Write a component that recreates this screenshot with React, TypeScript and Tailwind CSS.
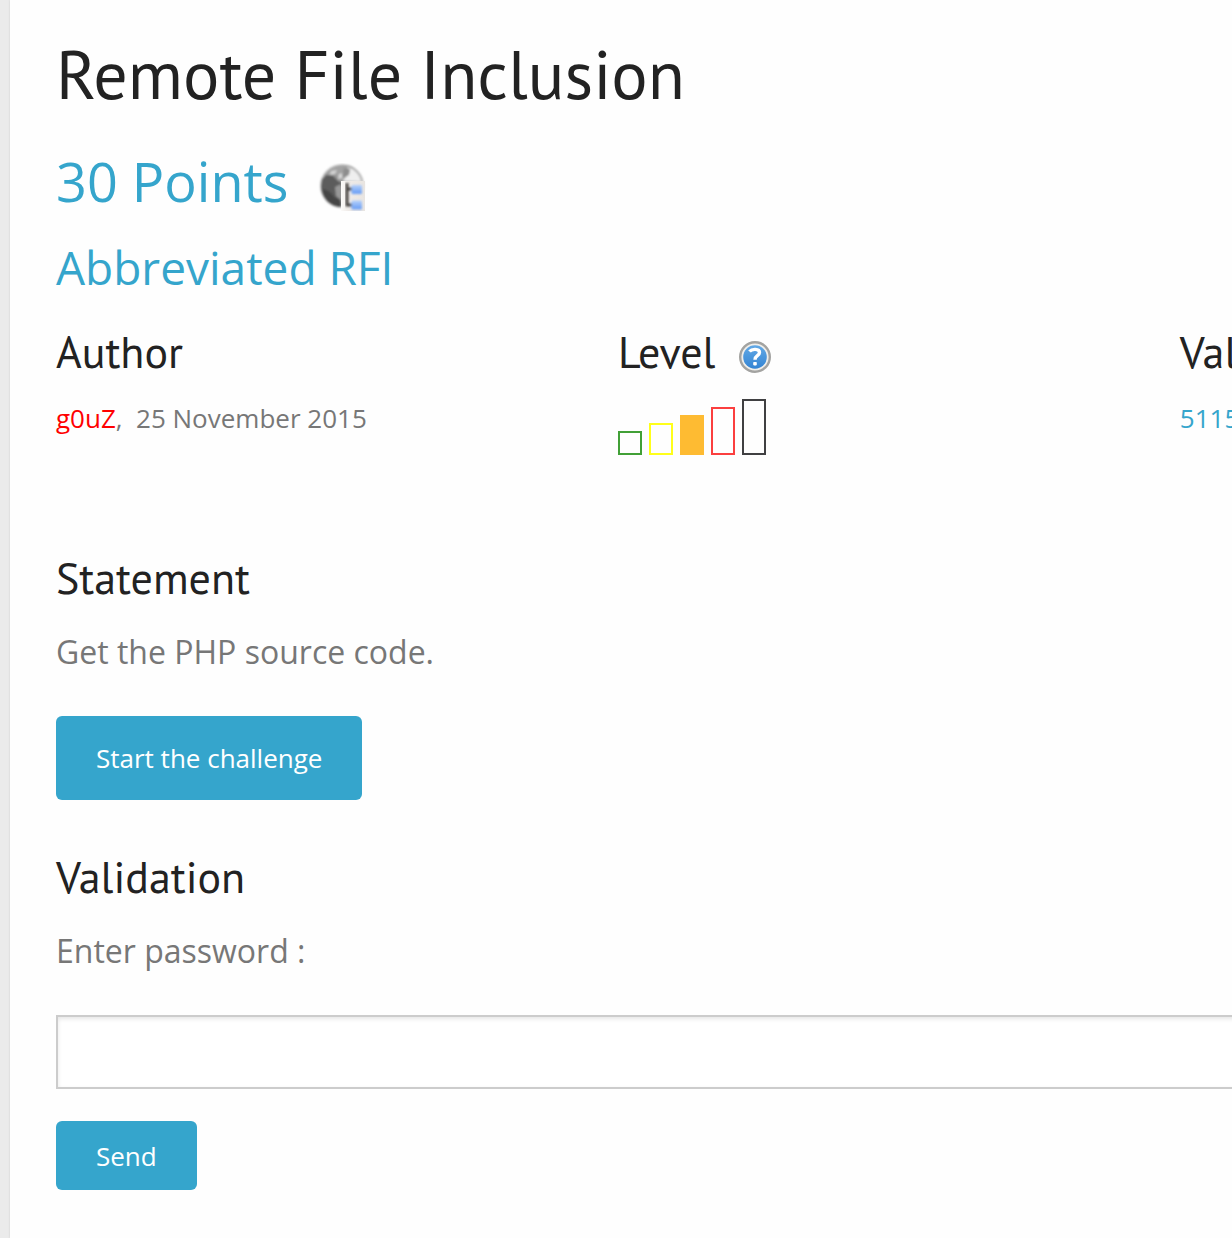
import React from "react";

const heading = "font-['PT_Sans',Lato,sans-serif] text-[#222]";

function GlobeTreeIcon() {
  return (
    <svg viewBox="0 0 48 48" className="size-12" role="img" aria-label="Web server">
      <defs>
        <linearGradient id="globe" x1="0" y1="0.6" x2="1" y2="0.2">
          <stop offset="0" stopColor="#4a4a4a" />
          <stop offset="0.45" stopColor="#9a9a9a" />
          <stop offset="1" stopColor="#ececec" />
        </linearGradient>
        <linearGradient id="node" x1="0" y1="0" x2="0" y2="1">
          <stop offset="0" stopColor="#b4d0fb" />
          <stop offset="1" stopColor="#669cf5" />
        </linearGradient>
        <linearGradient id="panel" x1="0" y1="0" x2="1" y2="0">
          <stop offset="0" stopColor="#fbfaf9" />
          <stop offset="0.3" stopColor="#efebe8" />
          <stop offset="1" stopColor="#e9e5e1" />
        </linearGradient>
        <filter id="soft" x="-10%" y="-10%" width="120%" height="120%">
          <feGaussianBlur stdDeviation="0.9" />
        </filter>
      </defs>
      <g filter="url(#soft)">
        <circle cx="24" cy="23" r="21" fill="url(#globe)" stroke="#bdbdbd" strokeWidth="1.6" />
        <path d="M8 12C12 5 19 2 26 2c5 0 8 1 11 4l-7 4-7 3-8-1z" fill="#a2a2a2" />
        <path d="M4 16l6-4 5 1 5 5 5 2-2 5-4 4 3 6 1 9C12 44 3 34 3 23z" fill="#5c5c5c" />
        <path d="M4 26c6 1 10 4 12 8l6 3 1 7C12 43 5 36 4 26z" fill="#454545" />
        <path d="M13 8l6-1-2 4-5 1z" fill="#d4d4d4" />
        <path d="M21 11l5-1-2 5-4 1z" fill="#d8d8d8" />
        <path d="M17 24l6-3v16l-5-4z" fill="#989898" />
        <path d="M29 4c8 2 13 7 15 14H25l4-6 3-3z" fill="#efefef" />
        <path d="M26 5l6 1-1 6-5 3-2-2z" fill="#8d8d8d" />
        <path d="M36 6c4 3 7 7 8 12" fill="none" stroke="#b2b2b2" strokeWidth="2" />
      </g>
      <path d="M23 18h24v30H23z" fill="url(#panel)" />
      <g filter="url(#soft)">
        <path d="M29 20v22h7M29 26h7" fill="none" stroke="#474443" strokeWidth="3" />
        <rect x="33.5" y="22" width="10.5" height="9" rx="1" fill="url(#node)" />
        <rect x="33.5" y="37.500" width="10.5" height="9" rx="1" fill="url(#node)" />
      </g>
    </svg>
  );
}

function HelpIcon() {
  return (
    <svg viewBox="0 0 32 32" className="size-8" aria-hidden="true">
      <defs>
        <linearGradient id="help" x1="0" y1="0" x2="0" y2="1">
          <stop offset="0" stopColor="#62a9e6" />
          <stop offset="1" stopColor="#3484d3" />
        </linearGradient>
        <filter id="helpSoft" x="-10%" y="-10%" width="120%" height="120%">
          <feGaussianBlur stdDeviation="0.5" />
        </filter>
      </defs>
      <g filter="url(#helpSoft)">
        <circle cx="16" cy="16" r="14.8" fill="#efeeeb" stroke="#a3a3a1" strokeWidth="2.4" />
        <circle cx="16" cy="16" r="11.8" fill="url(#help)" />
        <path d="M10.500 10.500C13 7.500 20.500 7.500 20.500 11.500c0 3.500-4.500 3-4.500 7.200" fill="none" stroke="#fff" strokeWidth="3.4" />
        <rect x="14.200" y="21" width="3.600" height="3.400" rx="0.800" fill="#fff" />
      </g>
    </svg>
  );
}

const levels = [
  "h-6 border-[#41a037]",
  "h-8 border-[#ffff1a]",
  "h-10 border-[#febb32] bg-[#febb32]",
  "h-12 border-[#fb3f3f]",
  "h-14 border-[#404042]",
];

export default function App() {
  return (
    <div className="min-h-screen overflow-hidden bg-[#ebebeb] pl-[10px] font-['Open_Sans',sans-serif] text-[#777]">
      <main className="min-h-screen overflow-hidden bg-[#fefefe] pt-[34px] pb-12 pl-[46px] shadow-[0_0_2px_#ccc]">
        <div className="w-[143%]">
          <h1 className={`${heading} text-[68px] leading-[80px]`}>Remote File Inclusion</h1>
          <h2 className="mt-[31px] flex items-end gap-[30px] text-[54px] leading-[72px] text-[#35a5cc]">
            30 Points
            <span className="pb-1.5">
              <GlobeTreeIcon />
            </span>
          </h2>
          <h3 className="mt-5 text-[46px] leading-[60px] text-[#35a5cc]">Abbreviated RFI</h3>

          <div className="mt-[27px] grid grid-cols-3 gap-1">
            <section>
              <h4 className={`${heading} text-[44px] leading-[56px]`}>Author</h4>
              <p className="mt-[18px] text-[26px] leading-10">
                <a href="#author" className="text-[#f00]">g0uZ</a>,&nbsp; 25 November 2015
              </p>
            </section>
            <section>
              <h4 className={`${heading} flex items-center gap-6 text-[44px] leading-[56px]`}>
                Level
                <button type="button" aria-label="About levels" className="mt-2.5">
                  <HelpIcon />
                </button>
              </h4>
              <div className="mt-[19px] flex items-end gap-[7px]" role="img" aria-label="Medium">
                {levels.map((level) => (
                  <span key={level} className={`w-6 border-2 ${level}`} />
                ))}
              </div>
            </section>
            <section>
              <h4 className={`${heading} text-[44px] leading-[56px]`}>Validations</h4>
              <p className="mt-[18px] text-[26px] leading-10">
                <a href="#validations" className="text-[#35a5cc]">5115</a>
              </p>
            </section>
          </div>

          <section className="mt-[95px]">
            <h4 className={`${heading} text-[44px] leading-[56px]`}>Statement</h4>
            <p className="mt-[22px] text-[32px] leading-[48px]">Get the PHP source code.</p>
            <a
              href="#start"
              className="mt-10 inline-block rounded-md bg-[#35a5cc] px-10 py-[22px] text-[26px] leading-10 text-white"
            >
              Start the challenge
            </a>
          </section>

          <form className="mt-[49px]" onSubmit={(e) => e.preventDefault()}>
            <h4 className={`${heading} text-[44px] leading-[56px]`}>Validation</h4>
            <label htmlFor="password" className="mt-[22px] block text-[32px] leading-[48px]">
              Enter password :
            </label>
            <input
              id="password"
              type="text"
              className="mt-10 block h-[74px] w-full border-2 border-[#ccc] bg-white px-4 text-[28px] shadow-[inset_0_2px_4px_rgba(0,0,0,0.1)] outline-none"
            />
            <button type="submit" className="mt-8 h-[69px] rounded-md bg-[#35a5cc] px-10 text-[26px] leading-10 text-white">
              Send
            </button>
          </form>
        </div>
      </main>
    </div>
  );
}
